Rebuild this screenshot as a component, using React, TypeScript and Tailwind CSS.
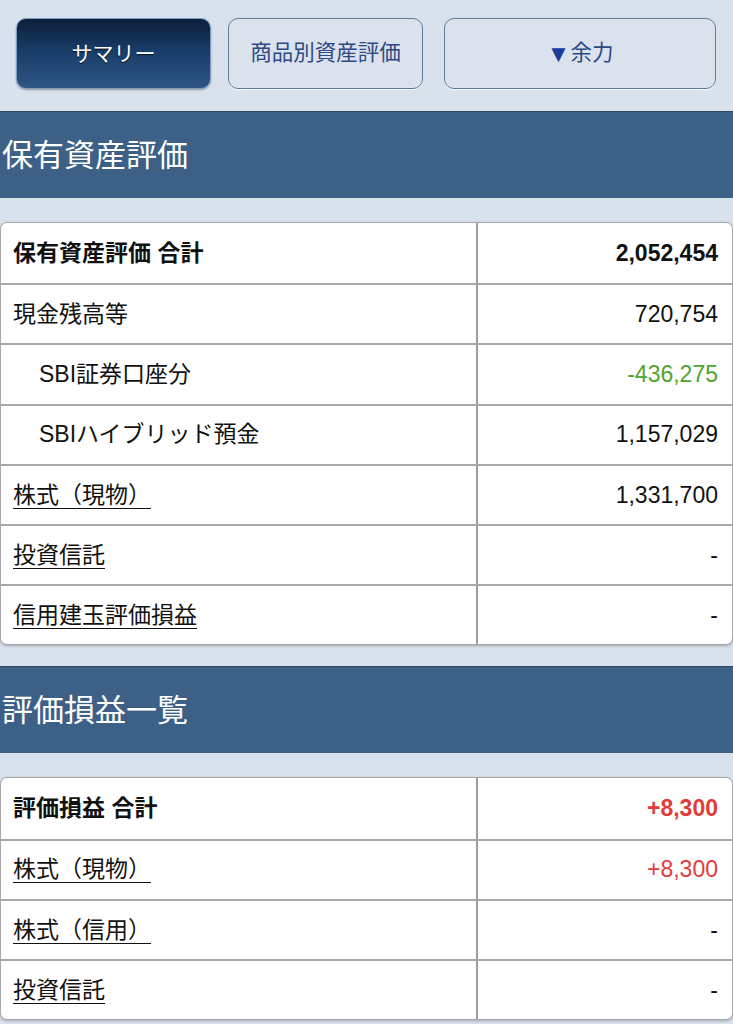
import React from "react";

type Row = {
  label: string;
  value: string;
  bold?: boolean;
  indent?: boolean;
  link?: boolean;
  tone?: "plus" | "minus";
};

const holdings: Row[] = [
  { label: "保有資産評価 合計", value: "2,052,454", bold: true },
  { label: "現金残高等", value: "720,754" },
  { label: "SBI証券口座分", value: "-436,275", indent: true, tone: "minus" },
  { label: "SBIハイブリッド預金", value: "1,157,029", indent: true },
  { label: "株式（現物）", value: "1,331,700", link: true },
  { label: "投資信託", value: "-", link: true },
  { label: "信用建玉評価損益", value: "-", link: true },
];

const profits: Row[] = [
  { label: "評価損益 合計", value: "+8,300", bold: true, tone: "plus" },
  { label: "株式（現物）", value: "+8,300", link: true, tone: "plus" },
  { label: "株式（信用）", value: "-", link: true },
  { label: "投資信託", value: "-", link: true },
];

function SectionHeader({ title }: { title: string }) {
  return (
    <div className="flex h-[87px] items-center border-t border-[#2a4869] bg-[#3d6186] pl-[2px] text-[31px] leading-none text-white">
      {title}
    </div>
  );
}

function Table({ rows }: { rows: Row[] }) {
  return (
    <div className="overflow-hidden rounded-[7px] border border-[#a8a8a8] bg-white shadow-[0_1px_3px_rgba(0,0,0,0.25)]">
      {rows.map((row, i) => {
        const valueColor =
          row.tone === "plus" ? "text-[#e23b3b]" : row.tone === "minus" ? "text-[#4fa52f]" : "text-[#111]";
        return (
          <div key={i} className={`flex h-[60.2px] ${i > 0 ? "border-t-2 border-[#a8a8a8]" : ""}`}>
            <div
              className={`flex w-[477px] shrink-0 items-center border-r-2 border-[#9c9c9c] ${row.indent ? "pl-[38px]" : "pl-[12px]"} ${row.bold ? "font-bold" : ""}`}
            >
              <span className={row.link ? "underline decoration-1 underline-offset-[5px]" : ""}>{row.label}</span>
            </div>
            <div className={`flex flex-1 items-center justify-end pr-[14px] ${valueColor} ${row.bold ? "font-bold" : ""}`}>
              {row.value}
            </div>
          </div>
        );
      })}
    </div>
  );
}

export default function App() {
  return (
    <div className="min-h-screen bg-[#d9e1ec] pb-10 font-['Liberation_Sans','Noto_Sans_CJK_JP',sans-serif] text-[23px] text-[#111]">
      <div className="flex pt-[18px] pl-4">
        <button
          type="button"
          className="flex h-[71px] w-[195px] items-center justify-center rounded-[10px] border border-[#7e9dc0] bg-gradient-to-b from-[#0b1f3a] via-[#1a3f6c] to-[#2f5684] text-[21px] text-white shadow-[0_1px_2px_rgba(0,0,0,0.35)] [text-shadow:0_1px_1px_rgba(0,0,0,0.8)]"
        >
          サマリー
        </button>
        <button
          type="button"
          className="ml-[17px] flex h-[71px] w-[195px] items-center justify-center rounded-[10px] border-[1.5px] border-[#5b7b9d] bg-[#dbe2ed] text-[21.5px] text-[#2c4a84] shadow-[0_1px_1px_rgba(255,255,255,0.8)]"
        >
          商品別資産評価
        </button>
        <button
          type="button"
          className="ml-[21px] flex h-[71px] w-[272px] items-center justify-center rounded-[10px] border-[1.5px] border-[#5b7b9d] bg-[#dbe2ed] text-[21.5px] text-[#2c4a84] shadow-[0_1px_1px_rgba(255,255,255,0.8)]"
        >
          <span className="text-[24px] text-[#1c3c9c]">▼</span>余力
        </button>
      </div>

      <div className="mt-[22px]">
        <SectionHeader title="保有資産評価" />
      </div>
      <div className="mt-6">
        <Table rows={holdings} />
      </div>

      <div className="mt-[21px]">
        <SectionHeader title="評価損益一覧" />
      </div>
      <div className="mt-6">
        <Table rows={profits} />
      </div>
    </div>
  );
}
